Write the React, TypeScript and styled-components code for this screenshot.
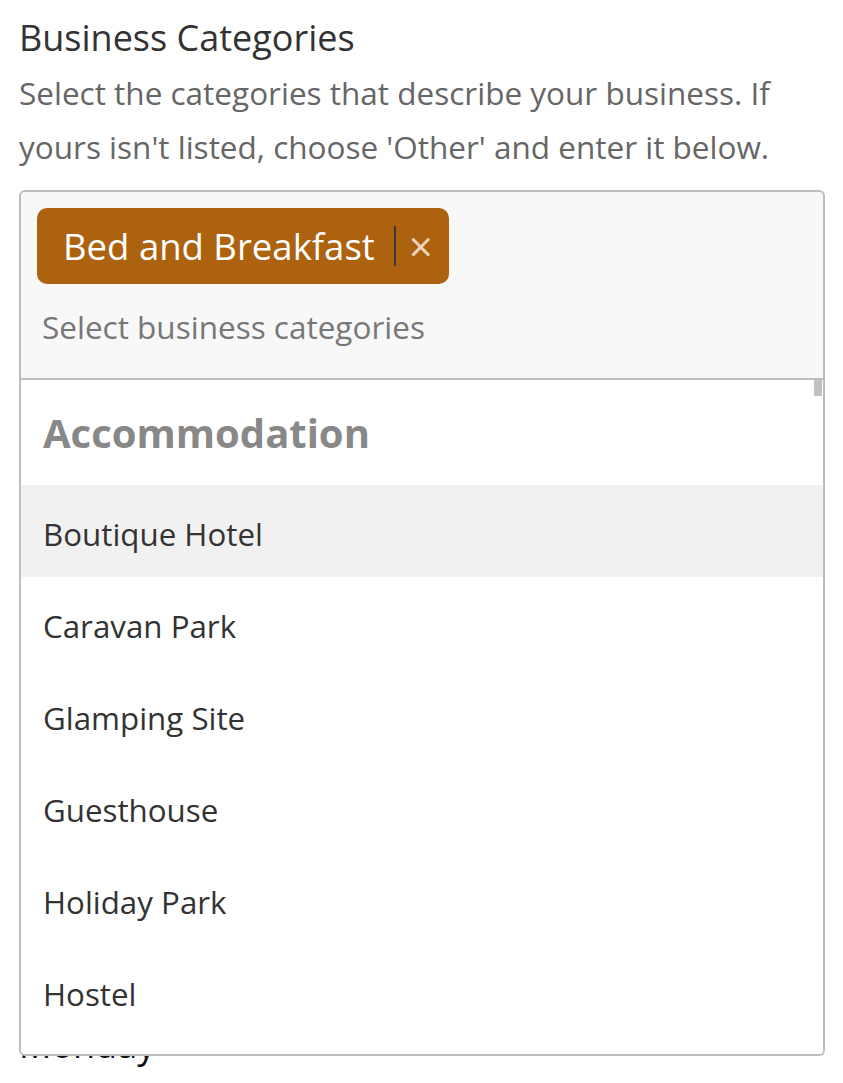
import React from "react";
import styled, { createGlobalStyle } from "styled-components";

const Global = createGlobalStyle`
  html, body { margin: 0; padding: 0; background: #fff; }
  body { font-family: "Open Sans", "Noto Sans", sans-serif; }
  * { box-sizing: border-box; }
`;

const Page = styled.div`
  padding: 15px 18px 0 19px;
  width: 843px;
`;

const Title = styled.h2`
  margin: 0;
  font-size: 36px;
  font-weight: 400;
  line-height: 46px;
  color: #333;
`;

const Help = styled.p`
  margin: 5px 0 0;
  font-size: 31.5px;
  line-height: 54px;
  color: #666;
`;

const Field = styled.div`
  position: relative;
  margin-top: 16px;
  width: 806px;
`;

const Control = styled.div`
  background: #f8f8f8;
  border: 2px solid #bdbdbd;
  border-radius: 6px 6px 0 0;
  padding: 16px 16px 0 16px;
  height: 190px;
`;

const Tag = styled.div`
  display: inline-flex;
  align-items: center;
  height: 76px;
  padding: 0 16px 0 26px;
  background: #ac620f;
  border-radius: 10px;
  color: #fff;
  font-size: 36.5px;
`;

const TagLabel = styled.span`
  padding-right: 19px;
`;

const TagDivider = styled.span`
  width: 2px;
  height: 40px;
  background: #3a3a3a;
`;

const TagRemove = styled.span`
  margin-left: 13px;
  color: #ecd6bb;
  font-size: 42px;
  line-height: 1;
`;

const Placeholder = styled.div`
  margin-top: 20px;
  padding-left: 5px;
  font-size: 31.5px;
  line-height: 46px;
  color: #777;
`;

const Menu = styled.div`
  position: absolute;
  z-index: 2;
  top: 100%;
  left: 0;
  right: 0;
  height: 676px;
  background: #fff;
  border: 2px solid #bdbdbd;
  border-top: none;
  border-radius: 0 0 6px 6px;
  overflow: hidden;
`;

const Thumb = styled.div`
  position: absolute;
  top: 0;
  right: 1px;
  width: 8px;
  height: 16px;
  background: #c1c1c1;
`;

const GroupHeader = styled.div`
  height: 105px;
  display: flex;
  align-items: center;
  padding-left: 22px;
  font-size: 40px;
  font-weight: 700;
  color: #888;
`;

const Option = styled.div<{ $active?: boolean }>`
  height: 92px;
  display: flex;
  align-items: center;
  padding: 6px 0 0 22px;
  font-size: 31.3px;
  color: #333;
  background: ${(p) => (p.$active ? "#f1f1f1" : "#fff")};
`;

const Next = styled.div`
  margin-top: 642px;
  font-size: 36px;
  line-height: 46px;
  color: #111;
`;

const options = [
  "Boutique Hotel",
  "Caravan Park",
  "Glamping Site",
  "Guesthouse",
  "Holiday Park",
  "Hostel",
  "Hotel",
  "Lodge",
];

export default function App() {
  return (
    <Page>
      <Global />
      <Title>Business Categories</Title>
      <Help>
        Select the categories that describe your business. If yours isn't listed, choose 'Other' and enter it below.
      </Help>
      <Field>
        <Control>
          <Tag>
            <TagLabel>Bed and Breakfast</TagLabel>
            <TagDivider />
            <TagRemove>×</TagRemove>
          </Tag>
          <Placeholder>Select business categories</Placeholder>
        </Control>
        <Menu>
          <Thumb />
          <GroupHeader>Accommodation</GroupHeader>
          {options.map((o, i) => (
            <Option key={o} $active={i === 0}>
              {o}
            </Option>
          ))}
        </Menu>
      </Field>
      <Next>Monday</Next>
    </Page>
  );
}
